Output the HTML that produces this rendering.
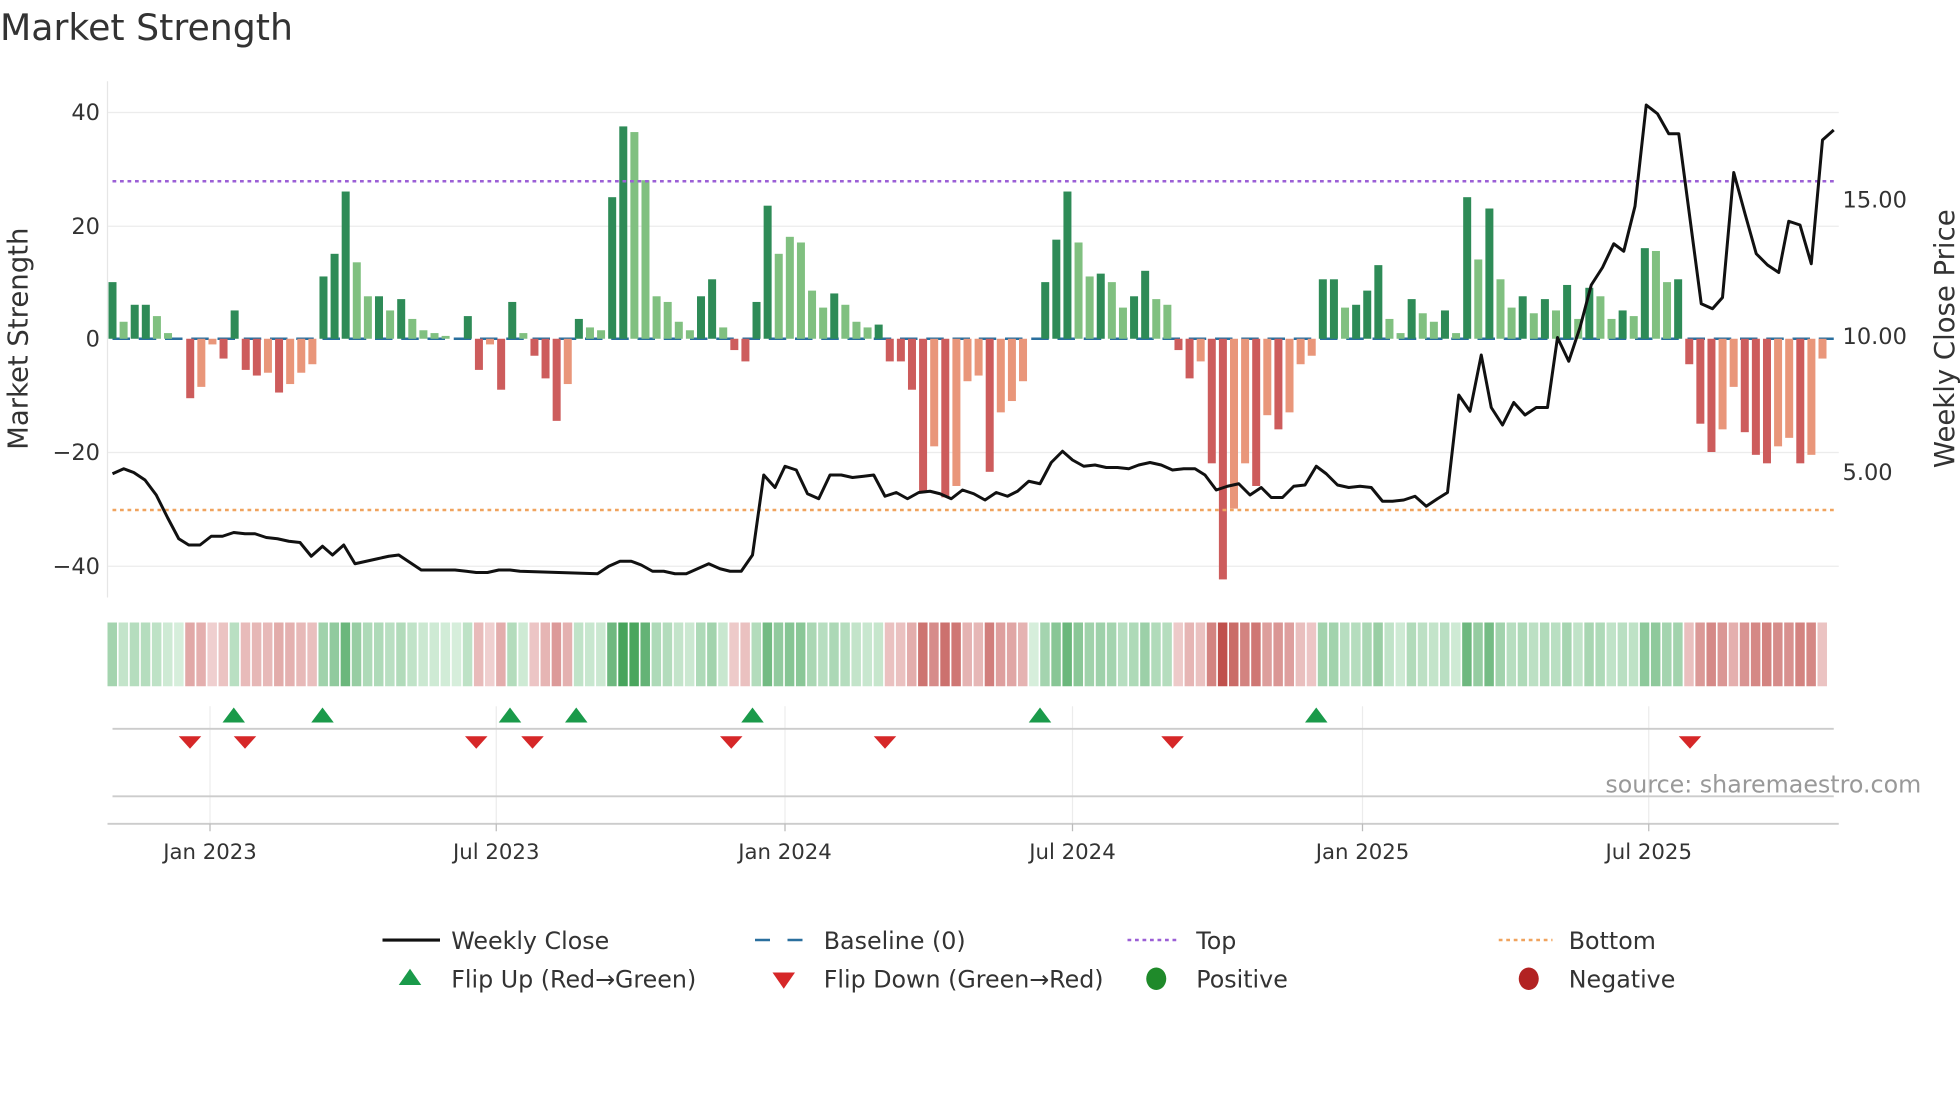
<!DOCTYPE html>
<html><head><meta charset="utf-8"><style>
html,body{margin:0;padding:0;background:#fff;width:1960px;height:1102px;overflow:hidden}
svg{display:block}
text{font-family:"DejaVu Sans","Liberation Sans",sans-serif;fill:#333}
</style></head><body>
<svg id="s" width="1960" height="1102" viewBox="0 0 1568 881.6" xmlns="http://www.w3.org/2000/svg">
<text x="0" y="32" font-size="29">Market Strength</text>
<g stroke="#ececec" stroke-width="1">
<line x1="86" y1="90" x2="1471" y2="90"/><line x1="86" y1="181" x2="1471" y2="181"/>
<line x1="86" y1="362" x2="1471" y2="362"/><line x1="86" y1="453" x2="1471" y2="453"/>
</g>
<line x1="86" y1="65" x2="86" y2="478" stroke="#e6e6e6"/>
<g font-size="18" text-anchor="end">
<text x="80" y="96">40</text><text x="80" y="187">20</text><text x="80" y="277">0</text>
<text x="80" y="368">−20</text><text x="80" y="459">−40</text>
</g>
<g font-size="18">
<text x="1474" y="166">15.00</text><text x="1474" y="275">10.00</text><text x="1474" y="384">5.00</text>
</g>
<text transform="translate(22,271) rotate(-90)" font-size="22" text-anchor="middle">Market Strength</text>
<text transform="translate(1563,271) rotate(-90)" font-size="22" text-anchor="middle">Weekly Close Price</text>
<line x1="90" y1="271" x2="1467" y2="271" stroke="#2a6f9e" stroke-width="2" stroke-dasharray="14,7"/>
<g id="bars"></g>
<line x1="90" y1="145" x2="1467" y2="145" stroke="#9b5fd6" stroke-width="2" stroke-dasharray="3,3"/>
<line x1="90" y1="408" x2="1467" y2="408" stroke="#f0a35e" stroke-width="2" stroke-dasharray="3,3"/>
<polyline id="pl" fill="none" stroke="#111" stroke-width="2.4" stroke-linejoin="round"/>
<g id="heat"></g>
<g stroke="#ececec"><line x1="168" y1="565" x2="168" y2="659"/><line x1="397" y1="565" x2="397" y2="659"/><line x1="628" y1="565" x2="628" y2="659"/><line x1="858" y1="565" x2="858" y2="659"/><line x1="1090" y1="565" x2="1090" y2="659"/><line x1="1319" y1="565" x2="1319" y2="659"/></g>
<line x1="90" y1="583" x2="1467" y2="583" stroke="#ccc" stroke-width="1.5"/>
<line x1="90" y1="637" x2="1467" y2="637" stroke="#ccc" stroke-width="1.5"/>
<line x1="86" y1="659" x2="1471" y2="659" stroke="#ccc" stroke-width="1.5"/>
<g stroke="#bbb"><line x1="168" y1="659" x2="168" y2="665"/><line x1="397" y1="659" x2="397" y2="665"/><line x1="628" y1="659" x2="628" y2="665"/><line x1="858" y1="659" x2="858" y2="665"/><line x1="1090" y1="659" x2="1090" y2="665"/><line x1="1319" y1="659" x2="1319" y2="665"/></g>
<g id="flips"></g>
<text x="1537" y="634" font-size="19" text-anchor="end" style="fill:#999">source: sharemaestro.com</text>
<g font-size="17" text-anchor="middle">
<text x="168" y="687">Jan 2023</text><text x="397" y="687">Jul 2023</text><text x="628" y="687">Jan 2024</text>
<text x="858" y="687">Jul 2024</text><text x="1090" y="687">Jan 2025</text><text x="1319" y="687">Jul 2025</text>
</g>
<g font-size="19">
<line x1="306" y1="752" x2="352" y2="752" stroke="#111" stroke-width="2.5"/><text x="361" y="759">Weekly Close</text>
<line x1="604" y1="752" x2="646" y2="752" stroke="#2a6f9e" stroke-width="2" stroke-dasharray="12,14"/><text x="659" y="759">Baseline (0)</text>
<line x1="902" y1="752" x2="944" y2="752" stroke="#9b5fd6" stroke-width="2" stroke-dasharray="3,3"/><text x="957" y="759">Top</text>
<line x1="1199" y1="752" x2="1242" y2="752" stroke="#f0a35e" stroke-width="2" stroke-dasharray="3,3"/><text x="1255" y="759">Bottom</text>
<polygon points="328,775 319,788 337,788" fill="#1a9a4a"/><text x="361" y="790">Flip Up (Red→Green)</text>
<polygon points="618,778 636,778 627,791" fill="#d62728"/><text x="659" y="790">Flip Down (Green→Red)</text>
<ellipse cx="925" cy="783" rx="8" ry="9" fill="#1f8a2a"/><text x="957" y="790">Positive</text>
<ellipse cx="1223" cy="783" rx="8" ry="9" fill="#b22222"/><text x="1255" y="790">Negative</text>
</g>
</svg>
<script>
var B="10d 3l 6d 6d 4l 1l 0l -10.5r -8.5s -1s -3.5r 5d -5.5r -6.5r -6s -9.5r -8s -6s -4.5s 11d 15d 26d 13.5l 7.5l 7.5d 5l 7d 3.5l 1.5l 1l 0.5l 0l 4d -5.5r -1s -9r 6.5d 1l -3r -7r -14.5r -8s 3.5d 2l 1.5l 25d 37.5d 36.5l 28l 7.5l 6.5l 3l 1.5l 7.5d 10.5d 2l -2r -4r 6.5d 23.5d 15l 18l 17l 8.5l 5.5l 8d 6l 3l 2l 2.5d -4r -4r -9r -27r -19s -28r -26s -7.5s -6.5s -23.5r -13s -11s -7.5s 0l 10d 17.5d 26d 17l 11l 11.5d 10l 5.5l 7.5d 12d 7l 6l -2r -7r -4s -22r -42.5r -30s -22s -26r -13.5s -16r -13s -4.5s -3s 10.5d 10.5d 5.5l 6d 8.5d 13d 3.5l 1l 7d 4.5l 3l 5d 1l 25d 14l 23d 10.5l 5.5l 7.5d 4.5l 7d 5l 9.5d 3.5l 9d 7.5l 3.5l 5d 4l 16d 15.5l 10l 10.5d -4.5r -15r -20r -16s -8.5s -16.5r -20.5r -22r -19s -17.5s -22r -20.5s -3.5s".split(" ");
var C={d:"#2e8b57",l:"#80c080",r:"#cd5c5c",s:"#e9967a"};
var n=B.length,x0=90,x1=1458,dx=(x1-x0)/(n-1),ns="http://www.w3.org/2000/svg";
var g=document.getElementById("bars"),h=document.getElementById("heat");
function el(p,t,a){var e=document.createElementNS(ns,t);for(var k in a)e.setAttribute(k,a[k]);p.appendChild(e);return e}
function mix(a,b,t){var r="#";for(var i=0;i<3;i++){var c=Math.round(a[i]+(b[i]-a[i])*t);r+=("0"+c.toString(16)).slice(-2)}return r}
for(var i=0;i<n;i++){var v=parseFloat(B[i]),t=B[i].slice(-1),x=x0+i*dx;
 if(v!=0){var y=271-v*4.53;el(g,"rect",{x:x-3.2,y:Math.min(y,271),width:6.4,height:Math.abs(271-y),fill:C[t]});}
 var m=Math.min(1,Math.abs(v)/40),col;
 if(v>=0)col=mix([214,238,219],[63,160,85],Math.pow(m,0.8));else col=mix([242,214,214],[192,80,76],Math.pow(m,0.8));
 el(h,"rect",{x:x-4,y:498,width:dx-1.3,height:51,fill:col});
}
var P="90,379 99,375 107,378 116,384 125,396 134,414 143,431 151,436 160,436 169,429 178,429 187,426 196,427 204,427 213,430 222,431 231,433 240,434 249,445 258,437 266,444 275,436 284,451 293,449 302,447 311,445 319,444 328,450 337,456 346,456 355,456 364,456 373,457 381,458 390,458 399,456 408,456 416,457 478,459 487,453 496,449 505,449 513,452 522,457 531,457 540,459 549,459 558,455 567,451 576,455 584,457 593,457 602,444 611,380 620,390 628,373 637,376 646,395 655,399 664,380 673,380 682,382 691,381 699,380 708,397 717,394 726,399 735,394 744,393 752,395 761,399 770,392 779,395 788,400 797,394 806,397 814,393 823,385 832,387 841,370 850,361 858,368 867,373 876,372 885,374 894,374 903,375 911,372 920,370 929,372 938,376 947,375 956,375 964,380 973,392 982,389 991,387 1000,396 1009,390 1017,398 1026,398 1035,389 1044,388 1053,373 1061,379 1070,388 1079,390 1088,389 1097,390 1106,401 1114,401 1123,400 1132,397 1141,405 1150,399 1158,394 1167,316 1176,329 1185,284 1193,326 1202,340 1211,322 1220,332 1229,326 1238,326 1246,270 1255,289 1264,262 1273,228 1282,214 1291,195 1299,201 1308,165 1317,84 1326,91 1335,107 1343,107 1352,175 1361,243 1370,247 1378,238 1387,138 1396,171 1405,203 1414,212 1423,218 1431,177 1440,180 1449,211 1458,112 1467,104";
document.getElementById("pl").setAttribute("points",P);
var f=document.getElementById("flips");
[187,258,408,461,602,832,1053].forEach(function(x){el(f,"polygon",{points:(x)+",566 "+(x-9)+",578 "+(x+9)+",578",fill:"#1a9a4a"})});
[152,196,381,426,585,708,938,1352].forEach(function(x){el(f,"polygon",{points:(x-9)+",589 "+(x+9)+",589 "+x+",599",fill:"#d62728"})});
</script>
</body></html>
